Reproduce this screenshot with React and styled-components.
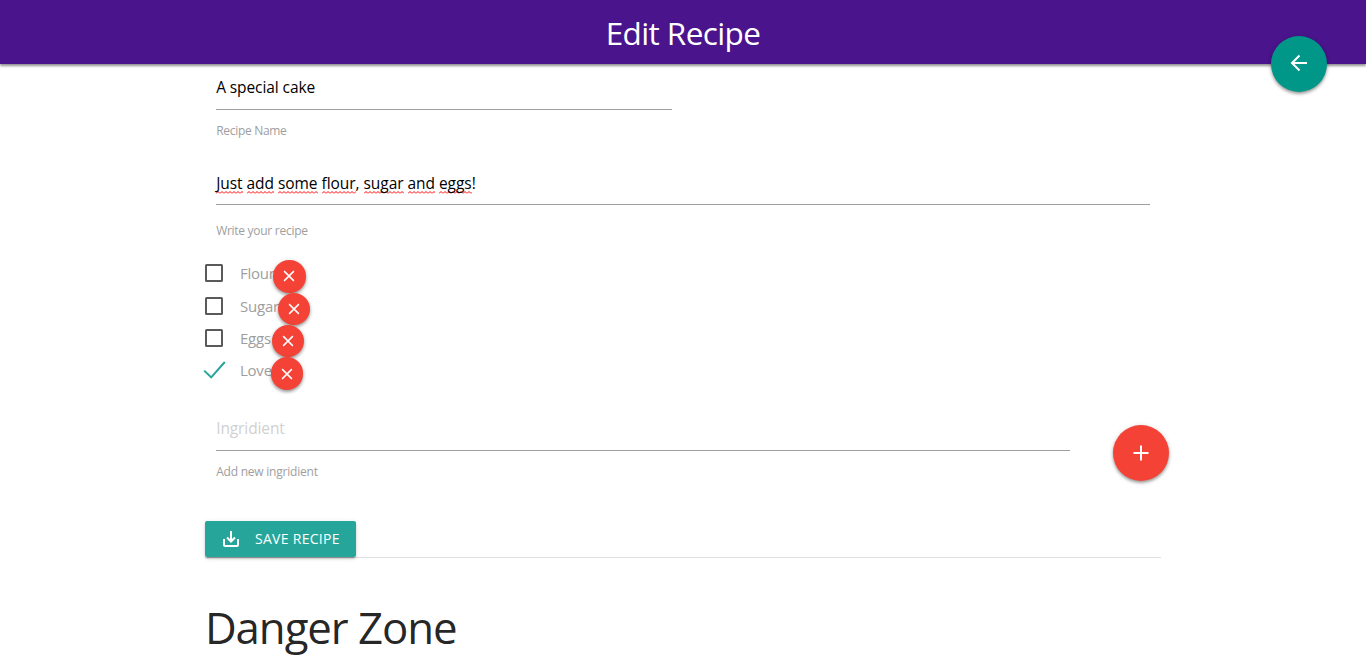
import React from "react";
import styled, { createGlobalStyle } from "styled-components";

const Global = createGlobalStyle`
  * { box-sizing: border-box; }
  html, body { margin: 0; background: #fff; overflow: hidden; }
  body {
    font-family: "Segoe UI", "Open Sans", "Noto Sans", sans-serif;
    font-size: 15px;
    line-height: 22.5px;
    color: rgba(0, 0, 0, 0.87);
  }
`;

const raised = "0 2px 2px 0 rgba(0,0,0,.14), 0 1px 5px 0 rgba(0,0,0,.12), 0 3px 1px -2px rgba(0,0,0,.2)";

const Page = styled.div`
  height: 657px;
  overflow: hidden;
`;

const Header = styled.header`
  position: relative;
  height: 64px;
  display: flex;
  justify-content: center;
  background: #4a148c;
  box-shadow: 0 2px 2px 0 rgba(0,0,0,.3), 0 1px 4px 0 rgba(0,0,0,.25);
`;

const Title = styled.div`
  color: #fff;
  font-size: 31.5px;
  line-height: 66px;
  white-space: nowrap;
  letter-spacing: -0.6px;
`;

const Fab = styled.button`
  width: ${(p) => p.$size}px;
  height: ${(p) => p.$size}px;
  flex: none;
  display: flex;
  align-items: center;
  justify-content: center;
  padding: 0;
  border: 0;
  border-radius: 50%;
  color: #fff;
  background: ${(p) => p.$color || "#f44336"};
  box-shadow: 0 2px 3px 0 rgba(0,0,0,.3), 0 1px 5px 0 rgba(0,0,0,.16);
`;

const BackSlot = styled.div`
  position: absolute;
  right: 39px;
  top: 36px;
`;

const Container = styled.main`
  width: 70%;
  margin: 0 auto;
`;

const Field = styled.div`
  width: ${(p) => p.$width};
  height: ${(p) => p.$height}px;
  flex: none;
  padding: 0 11.25px;
`;

const Value = styled.div`
  height: ${(p) => p.$height || 46}px;
  line-height: 47px;
  border-bottom: 1px solid #9e9e9e;
  font-size: 15.5px;
  color: ${(p) => (p.$placeholder ? "#d1d1d1" : "#000")};
  letter-spacing: ${(p) => p.$track}px;
  white-space: nowrap;
`;

const Helper = styled.div`
  padding-top: ${(p) => p.$gap}px;
  font-size: 12px;
  line-height: 18px;
  color: #9e9e9e;
  letter-spacing: ${(p) => p.$track}px;
`;

const Misspelt = styled.span`
  background: url("data:image/svg+xml,%3Csvg xmlns='http://www.w3.org/2000/svg' width='4' height='3'%3E%3Cpath d='M0 2.5L2 .5L4 2.5' fill='none' stroke='%23f00' stroke-width='1'/%3E%3C/svg%3E") repeat-x 0 100%;
`;

const List = styled.ul`
  list-style: none;
  margin: 0 0 14.85px;
  padding: 0.15px 0 0;
`;

const Item = styled.li`
  height: 32.4px;
  display: flex;
  align-items: flex-start;
`;

const Mark = styled.span`
  width: 35px;
  height: 26px;
  flex: none;
  svg { display: block; overflow: visible; }
`;

const ItemLabel = styled.span`
  width: ${(p) => p.$width}px;
  flex: none;
  line-height: 26.4px;
  color: #9e9e9e;
  white-space: nowrap;
  letter-spacing: -0.2px;
`;

const AddRow = styled.div`
  display: flex;
  height: 116px;
`;

const AddSlot = styled.div`
  padding: 20px 0 0 31.6px;
`;

const SaveRow = styled.div`
  height: 37px;
  border-bottom: 1px solid #e0e0e0;
`;

const SaveButton = styled.button`
  position: relative;
  width: 151px;
  height: 36px;
  display: flex;
  align-items: center;
  gap: 16px;
  padding: 1px 0 0 18px;
  border: 0;
  border-radius: 2px;
  background: #26a69a;
  color: #fff;
  font: inherit;
  font-size: 14px;
  letter-spacing: 0.3px;
  white-space: nowrap;
  box-shadow: ${raised};
`;

const Danger = styled.h3`
  margin: 41px 0 0;
  font-size: 43.8px;
  line-height: 56px;
  font-weight: 400;
  white-space: nowrap;
  letter-spacing: -1.08px;
`;

const Stroke = ({ d, size, box = 24, width = 2 }) => (
  <svg width={size} height={size} viewBox={`0 0 ${box} ${box}`} fill="none" stroke="currentColor" strokeWidth={width}>
    <path d={d} />
  </svg>
);

const items = [
  { name: "Flour", width: 33.4 },
  { name: "Sugar", width: 38 },
  { name: "Eggs", width: 32 },
  { name: "Love", width: 31, done: true },
];

const words = ["Just", "add", "some", "flour", "sugar", "and", "eggs"];
const after = { flour: ", ", eggs: "!" };

export default function App() {
  return (
    <Page>
      <Global />
      <Header>
        <Title>Edit Recipe</Title>
        <BackSlot>
          <Fab $size={56} $color="#009688" aria-label="Back">
            <Stroke size={24} d="M20 11H5M12.5 3.5L5 11L12.5 18.5" />
          </Fab>
        </BackSlot>
      </Header>
      <Container>
        <Field $width="50%" $height={96}>
          <Value $track={-0.09}>A special cake</Value>
          <Helper $gap={12} $track={-0.3}>Recipe Name</Helper>
        </Field>
        <Field $width="100%" $height={100}>
          <Value $height={45} $track={-0.05}>
            {words.map((w) => (
              <React.Fragment key={w}>
                <Misspelt>{w}</Misspelt>
                {after[w] || " "}
              </React.Fragment>
            ))}
          </Value>
          <Helper $gap={17} $track={-0.28}>Write your recipe</Helper>
        </Field>
        <List>
          {items.map((it) => (
            <Item key={it.name}>
              <Mark>
                <svg width="24" height="26" fill="none">
                  {it.done ? (
                    <path d="M-0.8 13.6L6.2 20.4L19.8 5" stroke="#26a69a" strokeWidth="2" />
                  ) : (
                    <rect x="1" y="5" width="16" height="16" rx="0.5" stroke="#5a5a5a" strokeWidth="2" />
                  )}
                </svg>
              </Mark>
              <ItemLabel $width={it.width}>{it.name}</ItemLabel>
              <Fab $size={32.4} aria-label="Remove">
                <Stroke size={18} d="M5.5 5.5L18.5 18.5M18.5 5.5L5.5 18.5" />
              </Fab>
            </Item>
          ))}
        </List>
        <AddRow>
          <Field $width="91.6667%" $height={100}>
            <Value $placeholder $track={-0.1}>Ingridient</Value>
            <Helper $gap={12} $track={-0.22}>Add new ingridient</Helper>
          </Field>
          <AddSlot>
            <Fab $size={56} aria-label="Add">
              <Stroke size={24} d="M12 4.5V19.5M4.5 12H19.5" />
            </Fab>
          </AddSlot>
        </AddRow>
        <SaveRow>
          <SaveButton>
            <Stroke size={16} box={16} d="M1 8V14Q1 15 2 15H14Q15 15 15 14V8M8 0V11M4 6.5L8 10.5L12 6.5" />
            SAVE RECIPE
          </SaveButton>
        </SaveRow>
        <Danger>Danger Zone</Danger>
      </Container>
    </Page>
  );
}
